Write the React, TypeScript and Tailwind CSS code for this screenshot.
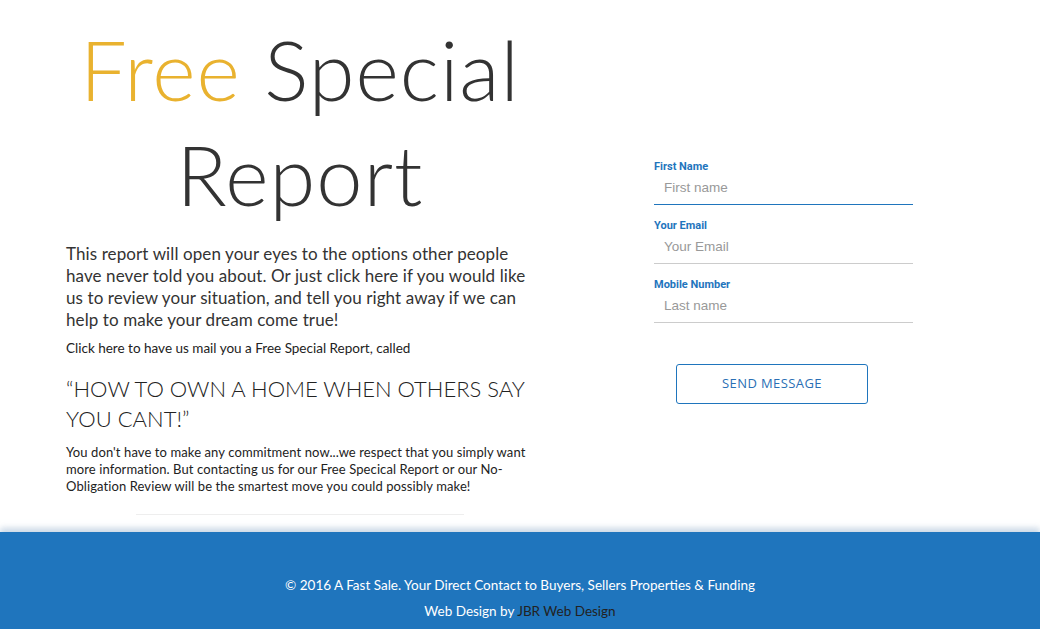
export default function App() {
  return (
    <div className="w-[1040px] h-[629px] overflow-hidden bg-white flex flex-col">
      <div className="flex h-[532px]">
        <div className="w-[468px] ml-[66px] flex flex-col font-['Lato',sans-serif] text-[#333]">
          <h1 className="mt-[17px] text-center text-[83px] leading-[105px] font-light tracking-[1px]">
            <span className="text-[#e9b22f]">Free</span> Special
            <br />
            Report
          </h1>
          <p className="mt-[16px] text-[17px] leading-[22px] tracking-[0.1px] text-[#333] whitespace-nowrap">
            This report will open your eyes to the options other people
            <br />
            have never told you about. Or just click here if you would like
            <br />
            us to review your situation, and tell you right away if we can
            <br />
            help to make your dream come true!
          </p>
          <p className="mt-[8px] text-[13.5px] leading-[18px] text-[#222]">
            Click here to have us mail you a Free Special Report, called
          </p>
          <h2 className="mt-[17px] text-[22px] leading-[30px] font-light text-[#222]">
            “HOW TO OWN A HOME WHEN OTHERS SAY
            <br />
            YOU CANT!”
          </h2>
          <p className="mt-[10px] text-[13px] leading-[17px] tracking-[0.1px] text-[#222] whitespace-nowrap">
            You don't have to make any commitment now...we respect that you simply want
            <br />
            more information. But contacting us for our Free Specical Report or our No-
            <br />
            Obligation Review will be the smartest move you could possibly make!
          </p>
          <div className="mt-[19px] mx-[70px] border-t border-[#eee]" />
        </div>
        <div className="ml-[120px] w-[259px] pt-[160px] flex flex-col">
          <label className="font-['Roboto',sans-serif] text-[11px] font-bold text-[#1f75bd] leading-[14px]">First Name</label>
          <input
            placeholder="First name"
            className="mt-[2px] h-[29px] pb-[5px] pl-[10px] font-['Liberation_Sans',sans-serif] text-[13.5px] placeholder:text-[#999] border-b border-[#1f75bd] outline-none"
          />
          <label className="mt-[14px] font-['Roboto',sans-serif] text-[11px] font-bold text-[#1f75bd] leading-[14px]">Your Email</label>
          <input
            placeholder="Your Email"
            className="mt-[2px] h-[29px] pb-[5px] pl-[10px] font-['Liberation_Sans',sans-serif] text-[13.5px] placeholder:text-[#999] border-b border-[#ccc] outline-none"
          />
          <label className="mt-[14px] font-['Roboto',sans-serif] text-[11px] font-bold text-[#1f75bd] leading-[14px]">Mobile Number</label>
          <input
            placeholder="Last name"
            className="mt-[2px] h-[29px] pb-[5px] pl-[10px] font-['Liberation_Sans',sans-serif] text-[13.5px] placeholder:text-[#999] border-b border-[#ccc] outline-none"
          />
          <button className="mt-[41px] ml-[22px] w-[192px] h-[40px] border border-[#1f75bd] rounded-[3px] text-[#2a6fb5] text-[13px] tracking-[0.4px] font-['Open_Sans',sans-serif]">
            SEND MESSAGE
          </button>
        </div>
      </div>
      <footer className="flex-1 bg-[#1f75bd] shadow-[0_-4px_6px_rgba(180,200,220,0.7)] flex flex-col items-center pt-[44px] font-['Lato',sans-serif] text-[13.5px] text-white">
        <p className="leading-[18px]">© 2016 A Fast Sale. Your Direct Contact to Buyers, Sellers Properties &amp; Funding</p>
        <p className="mt-[8px] leading-[18px]">
          Web Design by <span className="text-[#222]">JBR Web Design</span>
        </p>
      </footer>
    </div>
  )
}
